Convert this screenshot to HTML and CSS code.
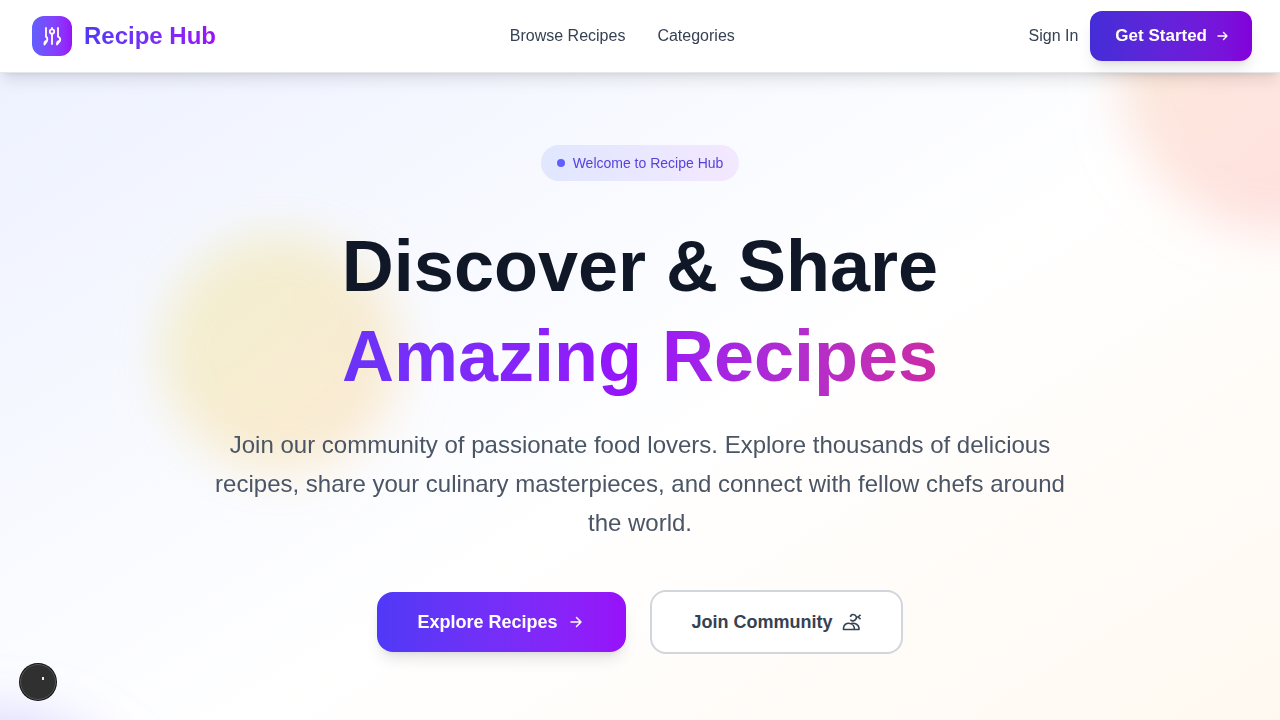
FILE: index.html
```html
<!DOCTYPE html>
<html lang="en">
<head>
<meta charset="utf-8">
<meta name="viewport" content="width=device-width, initial-scale=1">
<title>Recipe Hub</title>
<link rel="stylesheet" href="styles.css">
</head>
<body>
<header class="header">
  <a class="brand" href="#">
    <span class="brand-mark">
      <svg width="24" height="24" viewBox="0 0 24 24" fill="none" stroke="currentColor" stroke-width="1.800" stroke-linecap="round" stroke-linejoin="round" aria-hidden="true">
        <path d="M6 4V12.500M12 4V5M12 10V20M18 4V12.500"/>
        <circle cx="12" cy="7.500" r="2.200"/>
        <path d="M6 12.500Q8 14 7 17Q4 17 4.500 20.500M7 17L5 20M18 12.500Q21 14 20 17Q16.500 17 17 20.500M20 17L17.500 20"/>
      </svg>
    </span>
    <span class="brand-name">Recipe Hub</span>
  </a>
  <nav class="nav" aria-label="Main">
    <a href="#browse">Browse Recipes</a>
    <a href="#categories">Categories</a>
  </nav>
  <div class="account">
    <a class="sign-in" href="#signin">Sign In</a>
    <button class="button get-started" type="button">Get Started
      <svg width="16" height="16" viewBox="0 0 16 16" fill="none" stroke="currentColor" stroke-width="1.400" stroke-linecap="round" stroke-linejoin="round" aria-hidden="true"><path d="M3 8H12M8.500 4.500L12 8L8.500 11.500"/></svg>
    </button>
  </div>
</header>
<main class="hero">
  <div class="blob blob-peach"></div>
  <div class="blob blob-violet"></div>
  <div class="blob blob-yellow"></div>
  <div class="hero-content">
    <p class="welcome"><span class="dot"></span>Welcome to Recipe Hub</p>
    <h1 class="title">Discover &amp; Share<span class="title-accent">Amazing Recipes</span></h1>
    <p class="lead">Join our community of passionate food lovers. Explore thousands of delicious recipes, share your culinary masterpieces, and connect with fellow chefs around the world.</p>
    <div class="actions">
      <button class="button explore" type="button">Explore Recipes
        <svg width="20" height="20" viewBox="0 0 20 20" fill="none" stroke="currentColor" stroke-width="1.500" stroke-linecap="round" stroke-linejoin="round" aria-hidden="true"><path d="M5 10H15M10.500 5.500L15 10L10.500 14.500"/></svg>
      </button>
      <button class="button join" type="button">Join Community
        <svg width="20" height="20" viewBox="0 0 20 20" fill="none" stroke="currentColor" stroke-width="1.600" stroke-linejoin="round" aria-hidden="true">
          <path d="M2.500 17.500V16C3 12 6 10.800 9 11.500C12 12 13.500 15 13.500 17.500ZM13.500 17.500H18V16C17.500 13 14.500 10.500 10 11.500M9.500 5C9.500 2 14 1.500 15.500 5C15.500 9 10.500 10 9.500 7.500M15 5H17L19.500 2.800M17 5L19.500 7.200"/>
        </svg>
      </button>
    </div>
  </div>
</main>
<button class="dev-badge" type="button" aria-label="Open tools"><span></span></button>
</body>
</html>
```

FILE: styles.css
```css
* { box-sizing: border-box; }
body {
  margin: 0;
  font-family: "Liberation Sans", Arial, sans-serif;
  font-size: 16px;
  line-height: 24px;
  color: #364153;
  background: #fff;
}
a { color: inherit; text-decoration: none; }
h1, p { margin: 0; }
svg { display: block; flex: none; }
.header {
  position: sticky;
  top: 0;
  z-index: 10;
  display: flex;
  justify-content: space-between;
  align-items: center;
  height: 73px;
  padding: 0 28px 1px 32px;
  background: #fff;
  border-bottom: 1px solid #e5e7eb;
  box-shadow: 0 10px 15px -3px rgba(0,0,0,.1), 0 4px 6px -4px rgba(0,0,0,.1);
}
.brand { display: flex; align-items: center; gap: 12px; }
.brand-mark {
  display: grid;
  place-items: center;
  width: 40px;
  height: 40px;
  border-radius: 12px;
  color: #fff;
  background: linear-gradient(to right in oklab, #615fff, #9810fa);
}
.brand-name {
  font-size: 24px;
  line-height: 32px;
  font-weight: 700;
  color: transparent;
  background: linear-gradient(to right in oklab, #4f39f6, #9810fa);
  background-clip: text;
}
.nav { display: flex; gap: 32px; }
.account { display: flex; align-items: center; gap: 12px; }
.button {
  display: flex;
  align-items: center;
  justify-content: center;
  border: 0;
  font: inherit;
  font-weight: 700;
  cursor: pointer;
}
.get-started {
  gap: 8px;
  height: 50px;
  padding: 0 21px 0 25px;
  border-radius: 12px;
  font-size: 17px;
  color: #fff;
  background: linear-gradient(to right in oklab, #432dd7, #8200db);
  box-shadow: 0 10px 15px -3px rgba(0,0,0,.1), 0 4px 6px -4px rgba(0,0,0,.1);
}
.hero {
  position: relative;
  overflow: hidden;
  padding: 72px 32px 216px;
  background: linear-gradient(to bottom right in oklab, #eef2ff, #fff, #fff7ed);
}
.blob {
  position: absolute;
  border-radius: 50%;
  filter: blur(24px);
  mix-blend-mode: multiply;
  opacity: .2;
}
.blob-peach {
  top: -160px;
  right: -160px;
  width: 320px;
  height: 320px;
  background: linear-gradient(to right bottom in oklab, #fa9a00, #f65a80);
}
.blob-violet {
  bottom: -160px;
  left: -160px;
  width: 320px;
  height: 320px;
  background: linear-gradient(to bottom right in oklab, #5060f0, #8a50ff);
}
.blob-yellow {
  top: 160px;
  left: 160px;
  width: 240px;
  height: 240px;
  background: linear-gradient(to bottom right in oklab, #f0dc00, #ffa020);
}
.hero-content {
  position: relative;
  display: flex;
  flex-direction: column;
  align-items: center;
  text-align: center;
}
.welcome {
  display: flex;
  align-items: center;
  gap: 8px;
  padding: 8px 16px;
  border-radius: 18px;
  font-size: 14px;
  line-height: 20px;
  color: #5842db;
  background: linear-gradient(to right in oklab, #e0e7ff, #f3e8ff);
}
.dot { width: 8px; height: 8px; border-radius: 50%; background: #615fff; }
.title {
  max-width: 896px;
  width: 100%;
  margin-top: 40px;
  font-size: 72px;
  line-height: 90px;
  font-weight: 700;
  color: #101828;
}
.title-accent {
  display: block;
  color: transparent;
  background: linear-gradient(to right in oklab, #4f39f6, #9810fa, #e60076);
  background-clip: text;
}
.lead {
  max-width: 864px;
  margin-top: 24px;
  font-size: 24px;
  line-height: 39px;
  color: #4a5565;
}
.actions { display: flex; align-items: center; gap: 24px; margin-top: 48px; }
.explore, .join { gap: 8px; padding: 0 40px; border-radius: 16px; font-size: 18px; }
.explore {
  height: 60px;
  color: #fff;
  background: linear-gradient(to right in oklab, #4f39f6, #9810fa);
  box-shadow: 0 10px 15px -3px rgba(0,0,0,.1), 0 4px 6px -4px rgba(0,0,0,.1);
}
.join {
  height: 64px;
  color: #364153;
  background: #fff;
  border: 2px solid #d1d5dc;
}
.dev-badge {
  position: fixed;
  left: 20px;
  bottom: 20px;
  z-index: 20;
  width: 36px;
  height: 36px;
  padding: 0;
  border: 1px solid #555;
  border-radius: 50%;
  background: #303030;
  box-shadow: 0 0 0 1px #111;
}
.dev-badge span {
  position: absolute;
  top: 12px;
  left: 21px;
  width: 2px;
  height: 3px;
  background: #eee;
}
```
